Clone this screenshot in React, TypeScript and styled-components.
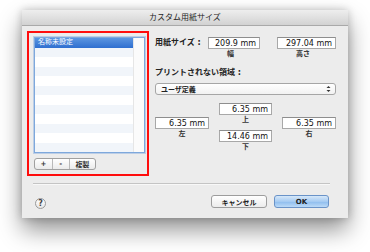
import React from 'react';
import styled, { createGlobalStyle } from 'styled-components';

const GlobalStyle = createGlobalStyle`
  html, body {
    margin: 0;
    padding: 0;
    background: #ffffff;
  }
  body {
    font-family: "DejaVu Sans", "Noto Sans CJK JP", sans-serif;
    color: #222;
  }
`;

const Page = styled.div`
  width: 370px;
  height: 252px;
  box-sizing: border-box;
  padding: 10px 0 0 22px;
  overflow: hidden;
`;

const Window = styled.div`
  width: 326px;
  height: 208px;
  display: flex;
  flex-direction: column;
  background: #ececec;
  box-shadow: 0 12px 22px rgba(0, 0, 0, 0.42), 0 0 8px rgba(0, 0, 0, 0.22);
`;

const TitleBar = styled.div`
  height: 16px;
  box-sizing: border-box;
  border-bottom: 1px solid #a9a9a9;
  background: linear-gradient(#eeeeee, #d2d2d2);
  font-size: 8px;
  line-height: 15px;
  text-align: center;
  color: #1e1e1e;
`;

const Body = styled.div`
  flex: 1;
  display: flex;
  flex-direction: column;
  padding: 5px 12px 0 5px;
`;

const TopRow = styled.div`
  display: flex;
  gap: 6px;
`;

const RedFrame = styled.div`
  width: 122px;
  height: 145px;
  box-sizing: border-box;
  border: 2px solid #ff0d0d;
  padding: 4px 0 0 5px;
  display: flex;
  flex-direction: column;
  gap: 5px;
`;

const List = styled.div`
  width: 111px;
  height: 116px;
  box-sizing: border-box;
  border: 1px solid #7ea8dc;
  box-shadow: 0 0 0 1px rgba(130, 170, 225, 0.45);
  background: #fff;
  display: flex;
`;

const Rows = styled.div`
  flex: 1;
  display: flex;
  flex-direction: column;
  overflow: hidden;
`;

const Row = styled.div<{ $selected?: boolean; $alt?: boolean }>`
  height: 9.5px;
  flex: none;
  padding-left: 3px;
  font-size: 7px;
  line-height: 9.5px;
  color: #fff;
  background: ${p =>
    p.$selected
      ? 'linear-gradient(#5c95e0, #2f6fd0)'
      : p.$alt
      ? '#f1f5fa'
      : '#ffffff'};
`;

const ScrollTrack = styled.div`
  width: 10px;
  border-left: 1px solid #e6e6e6;
  background: #fbfbfb;
`;

const SegGroup = styled.div`
  display: flex;
  width: 62px;
  height: 12px;
  box-sizing: border-box;
  border: 1px solid #a0a0a0;
  border-radius: 3px;
  background: linear-gradient(#ffffff, #ebebeb);
  overflow: hidden;
`;

const Seg = styled.div<{ $w: number }>`
  width: ${p => p.$w}px;
  display: flex;
  align-items: center;
  justify-content: center;
  font-size: 7px;
  color: #333;
  font-weight: bold;
  & + & {
    border-left: 1px solid #b9b9b9;
  }
`;

const RightPanel = styled.div`
  width: 181px;
  padding-top: 6px;
  display: flex;
  flex-direction: column;
`;

const SizeRow = styled.div`
  display: flex;
  align-items: center;
`;

const Label = styled.div<{ $w?: number }>`
  width: ${p => (p.$w ? `${p.$w}px` : 'auto')};
  font-size: 8px;
  font-weight: bold;
  line-height: 10px;
  color: #222;
  white-space: nowrap;
`;

const Field = styled.div<{ $w: number }>`
  width: ${p => p.$w}px;
  height: 12px;
  box-sizing: border-box;
  border: 1px solid #a8a8a8;
  border-top-color: #8e8e8e;
  background: #fff;
  font-size: 8px;
  line-height: 11px;
  text-align: right;
  padding-right: 3px;
  color: #111;
`;

const CaptionRow = styled.div`
  display: flex;
  height: 10px;
  padding-left: 53px;
`;

const Caption = styled.div<{ $w?: number }>`
  width: ${p => (p.$w ? `${p.$w}px` : 'auto')};
  font-size: 7px;
  line-height: 11px;
  text-align: center;
  color: #333;
  font-weight: bold;
`;

const Popup = styled.div`
  margin-top: 5px;
  height: 12px;
  box-sizing: border-box;
  border: 1px solid #a6a6a6;
  border-radius: 3px;
  background: linear-gradient(#ffffff, #f2f2f2);
  display: flex;
  align-items: center;
  justify-content: space-between;
  padding: 0 4px 0 5px;
  font-size: 7px;
  font-weight: bold;
  color: #222;
`;

const Margins = styled.div`
  margin-top: 8px;
  display: flex;
  justify-content: space-between;
  align-items: center;
`;

const MarginCol = styled.div`
  display: flex;
  flex-direction: column;
  align-items: center;
`;

const Separator = styled.div`
  margin: 7px 6px 0 6px;
  height: 1px;
  background: #c4c4c4;
  border-bottom: 1px solid #f8f8f8;
`;

const Footer = styled.div`
  margin-top: 10px;
  height: 13px;
  display: flex;
  align-items: center;
  padding: 0 7px 0 8px;
  gap: 7px;
`;

const HelpButton = styled.div`
  width: 11px;
  height: 11px;
  margin-top: 3px;
  box-sizing: border-box;
  border-radius: 50%;
  border: 1px solid #9a9a9a;
  background: linear-gradient(#ffffff, #e6e6e6);
  display: flex;
  align-items: center;
  justify-content: center;
  font-size: 8px;
  font-weight: bold;
  color: #444;
  margin-right: auto;
`;

const PushButton = styled.div<{ $w: number; $primary?: boolean }>`
  width: ${p => p.$w}px;
  height: 13px;
  box-sizing: border-box;
  border-radius: 3px;
  border: 1px solid ${p => (p.$primary ? '#6a93c8' : '#9d9d9d')};
  background: ${p =>
    p.$primary
      ? 'linear-gradient(#d6e8f9, #a6cbf2 50%, #8dbcee 51%, #bcdaf7)'
      : 'linear-gradient(#ffffff, #ececec)'};
  display: flex;
  align-items: center;
  justify-content: center;
  font-size: 7px;
  font-weight: bold;
  color: #222;
`;

const Arrows = () => (
  <svg width="5" height="8" viewBox="0 0 5 8">
    <path d="M0.5 3 L2.5 1 L4.5 3 Z M0.5 5 L2.5 7 L4.5 5 Z" fill="#333" />
  </svg>
);

const MarginField: React.FC<{ value: string; label: string; w: number }> = ({
  value,
  label,
  w,
}) => (
  <MarginCol>
    <Field $w={w}>{value}</Field>
    <Caption>{label}</Caption>
  </MarginCol>
);

export default function App() {
  const rows = Array.from({ length: 12 }, (_, i) => i);
  return (
    <Page>
      <GlobalStyle />
      <Window>
        <TitleBar>カスタム用紙サイズ</TitleBar>
        <Body>
          <TopRow>
            <RedFrame>
              <List>
                <Rows>
                  {rows.map(i => (
                    <Row key={i} $selected={i === 0} $alt={i % 2 === 1}>
                      {i === 0 ? '名称未設定' : ''}
                    </Row>
                  ))}
                </Rows>
                <ScrollTrack />
              </List>
              <SegGroup>
                <Seg $w={18}>+</Seg>
                <Seg $w={17}>-</Seg>
                <Seg $w={27}>複製</Seg>
              </SegGroup>
            </RedFrame>
            <RightPanel>
              <SizeRow>
                <Label $w={53}>用紙サイズ :</Label>
                <Field $w={52}>209.9 mm</Field>
                <Field $w={59} style={{ marginLeft: 17 }}>
                  297.04 mm
                </Field>
              </SizeRow>
              <CaptionRow>
                <Caption $w={52}>幅</Caption>
                <Caption $w={76} style={{ paddingLeft: 17 }}>
                  高さ
                </Caption>
              </CaptionRow>
              <Label style={{ marginTop: 9 }}>プリントされない領域 :</Label>
              <Popup>
                <span>ユーザ定義</span>
                <Arrows />
              </Popup>
              <Margins>
                <MarginField value="6.35 mm" label="左" w={54} />
                <MarginCol>
                  <Field $w={53}>6.35 mm</Field>
                  <Caption>上</Caption>
                  <Field $w={53} style={{ marginTop: 4 }}>
                    14.46 mm
                  </Field>
                  <Caption>下</Caption>
                </MarginCol>
                <MarginField value="6.35 mm" label="右" w={54} />
              </Margins>
            </RightPanel>
          </TopRow>
          <Separator />
          <Footer>
            <HelpButton>?</HelpButton>
            <PushButton $w={56}>キャンセル</PushButton>
            <PushButton $w={55} $primary>
              OK
            </PushButton>
          </Footer>
        </Body>
      </Window>
    </Page>
  );
}
